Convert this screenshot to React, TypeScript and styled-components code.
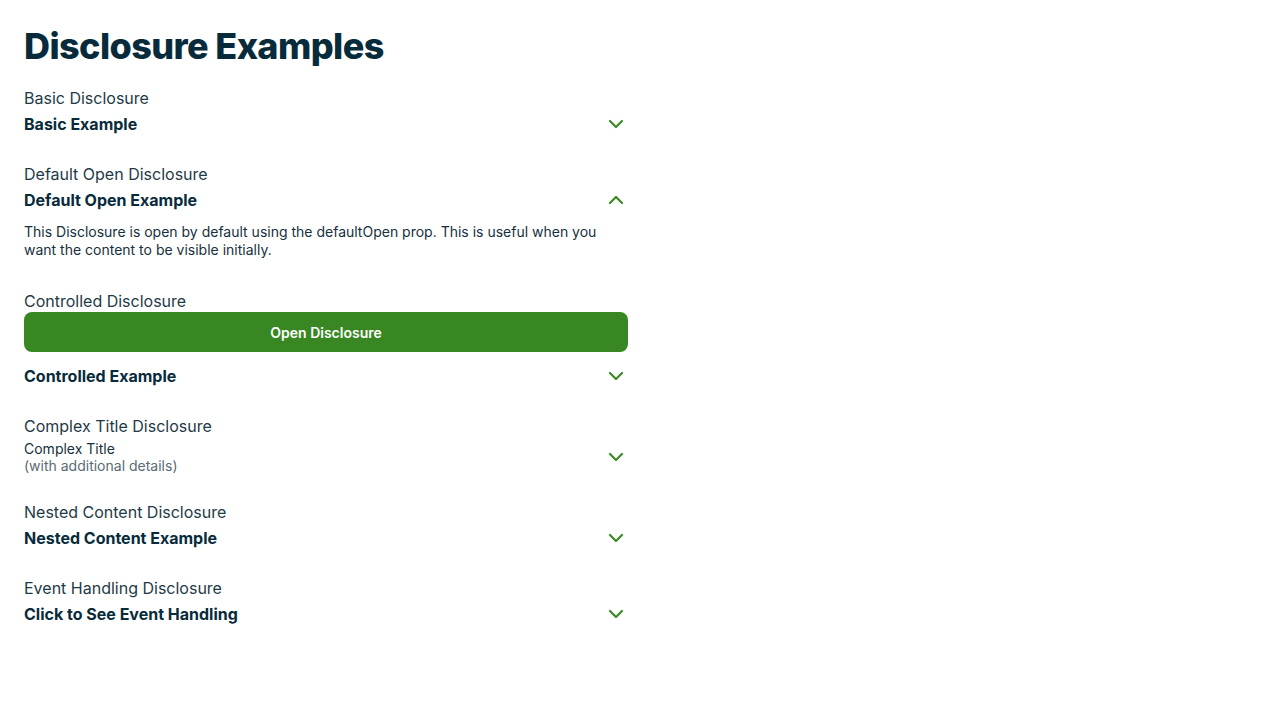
import React, { useState } from "react";
import styled, { createGlobalStyle } from "styled-components";
import { ChevronDown, ChevronUp } from "lucide-react";

const Global = createGlobalStyle`
  html, body { margin: 0; padding: 0; background: #ffffff; }
  body { font-family: Inter, "Noto Sans", sans-serif; color: #1d3744; }
  * { box-sizing: border-box; }
`;

const Page = styled.main`
  padding: 24px;
  width: 652px;
  display: flex;
  flex-direction: column;
`;

const Heading = styled.h1`
  margin: 0 0 18px;
  font-family: Inter, Lato, sans-serif;
  font-weight: 800;
  font-size: 36px;
  line-height: 44px;
  color: #082b3b;
  letter-spacing: -0.6px;
`;

const Section = styled.section`
  display: flex;
  flex-direction: column;
  margin-bottom: 24px;
`;

const Label = styled.div`
  font-size: 16px;
  line-height: 24px;
  color: #1f3a47;
`;

const Trigger = styled.button`
  display: flex;
  align-items: center;
  justify-content: space-between;
  width: 100%;
  padding: 2px 0;
  border: 0;
  background: transparent;
  cursor: pointer;
  text-align: left;
  font-family: inherit;
  color: #082b3b;
  svg { color: #3a8a26; flex: none; }
`;

const Title = styled.span`
  font-size: 16px;
  line-height: 24px;
  font-weight: 700;
`;

const ComplexBox = styled.span`
  display: flex;
  flex-direction: column;
`;

const ComplexMain = styled.span`
  font-size: 14px;
  line-height: 17px;
  color: #16303d;
`;

const ComplexSub = styled.span`
  font-size: 14px;
  line-height: 17px;
  color: #5a6b74;
`;

const Panel = styled.div`
  padding: 9px 0 6px;
  font-size: 14px;
  line-height: 18px;
  color: #16303d;
`;

const PrimaryButton = styled.button`
  width: 100%;
  height: 40px;
  margin: -1px 0 10px;
  border: 0;
  border-radius: 8px;
  background: #388723;
  color: #ffffff;
  font-family: inherit;
  font-size: 14px;
  font-weight: 600;
  cursor: pointer;
`;

type DiscProps = {
  title: React.ReactNode;
  defaultOpen?: boolean;
  open?: boolean;
  onToggle?: () => void;
  children?: React.ReactNode;
};

function Disclosure({ title, defaultOpen, open, onToggle, children }: DiscProps) {
  const [inner, setInner] = useState(!!defaultOpen);
  const isOpen = open !== undefined ? open : inner;
  const toggle = onToggle ?? (() => setInner((v) => !v));
  return (
    <>
      <Trigger onClick={toggle} aria-expanded={isOpen}>
        {title}
        {isOpen ? <ChevronUp size={24} strokeWidth={2.2} /> : <ChevronDown size={24} strokeWidth={2.2} />}
      </Trigger>
      {isOpen && <Panel>{children}</Panel>}
    </>
  );
}

export default function App() {
  const [controlled, setControlled] = useState(false);
  return (
    <Page>
      <Global />
      <Heading>Disclosure Examples</Heading>

      <Section>
        <Label>Basic Disclosure</Label>
        <Disclosure title={<Title>Basic Example</Title>}>
          This is the basic disclosure content.
        </Disclosure>
      </Section>

      <Section>
        <Label>Default Open Disclosure</Label>
        <Disclosure title={<Title>Default Open Example</Title>} defaultOpen>
          This Disclosure is open by default using the defaultOpen prop. This is useful when you want the content to be visible initially.
        </Disclosure>
      </Section>

      <Section>
        <Label>Controlled Disclosure</Label>
        <PrimaryButton onClick={() => setControlled((v) => !v)}>
          {controlled ? "Close Disclosure" : "Open Disclosure"}
        </PrimaryButton>
        <Disclosure
          title={<Title>Controlled Example</Title>}
          open={controlled}
          onToggle={() => setControlled((v) => !v)}
        >
          This disclosure is controlled by external state.
        </Disclosure>
      </Section>

      <Section>
        <Label>Complex Title Disclosure</Label>
        <Disclosure
          title={
            <ComplexBox>
              <ComplexMain>Complex Title</ComplexMain>
              <ComplexSub>(with additional details)</ComplexSub>
            </ComplexBox>
          }
        >
          Complex title content.
        </Disclosure>
      </Section>

      <Section>
        <Label>Nested Content Disclosure</Label>
        <Disclosure title={<Title>Nested Content Example</Title>}>
          Nested content.
        </Disclosure>
      </Section>

      <Section>
        <Label>Event Handling Disclosure</Label>
        <Disclosure title={<Title>Click to See Event Handling</Title>}>
          Event handling content.
        </Disclosure>
      </Section>
    </Page>
  );
}
